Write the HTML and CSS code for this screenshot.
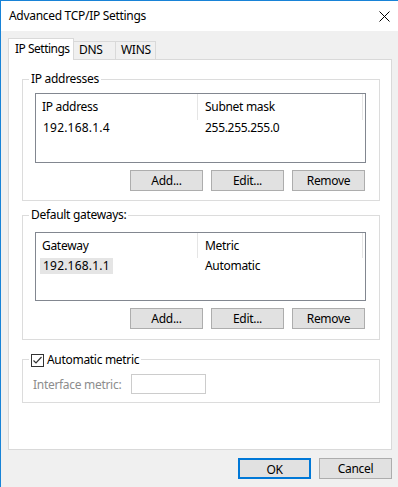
FILE: index.html
```html
<!DOCTYPE html>
<html lang="en">
<head>
    <meta charset="UTF-8" />
    <title>Advanced TCP/IP Settings</title>
    <link rel="stylesheet" href="styles.css">
</head>
<body>
<div class="window">
    <div class="titlebar">
        <span class="title">Advanced TCP/IP Settings</span>
        <svg class="close" width="11" height="11" viewBox="0 0 11 11">
            <path d="M0.5 0.5 L10.5 10.5 M10.5 0.5 L0.5 10.5" stroke="#000" stroke-width="1" fill="none"/>
        </svg>
    </div>
    <div class="content">
        <div class="tabs">
            <div class="tab active">IP Settings</div>
            <div class="tab dns">DNS</div>
            <div class="tab wins">WINS</div>
        </div>
        <div class="panel">
            <fieldset class="group g1">
                <legend>IP addresses</legend>
                <div class="group-body">
                    <div class="list">
                        <div class="row head">
                            <div class="col c1">IP address</div>
                            <div class="col c2">Subnet mask</div>
                        </div>
                        <div class="row">
                            <div class="col c1"><span class="val">192.168.1.4</span></div>
                            <div class="col c2">255.255.255.0</div>
                        </div>
                    </div>
                    <div class="buttons">
                        <button class="btn">Add...</button>
                        <button class="btn">Edit...</button>
                        <button class="btn">Remove</button>
                    </div>
                </div>
            </fieldset>

            <fieldset class="group g2">
                <legend>Default gateways:</legend>
                <div class="group-body">
                    <div class="list short">
                        <div class="row head">
                            <div class="col c1">Gateway</div>
                            <div class="col c2">Metric</div>
                        </div>
                        <div class="row">
                            <div class="col c1"><span class="val selected">192.168.1.1</span></div>
                            <div class="col c2">Automatic</div>
                        </div>
                    </div>
                    <div class="buttons">
                        <button class="btn">Add...</button>
                        <button class="btn">Edit...</button>
                        <button class="btn">Remove</button>
                    </div>
                </div>
            </fieldset>

            <fieldset class="group g3">
                <legend class="check-legend">
                    <svg class="checkbox" width="13" height="13" viewBox="0 0 13 13">
                        <rect x="0.5" y="0.5" width="12" height="12" fill="#fff" stroke="#333"/>
                        <path d="M2.5 6.5 L5 9 L10.5 3" stroke="#333" stroke-width="1.2" fill="none"/>
                    </svg>
                    <span>Automatic metric</span>
                </legend>
                <div class="group-body metric">
                    <span class="metric-label">Interface metric:</span>
                    <div class="input"></div>
                </div>
            </fieldset>
        </div>
        <div class="footer">
            <button class="btn ok">OK</button>
            <button class="btn">Cancel</button>
        </div>
    </div>
</div>
</body>
</html>
```

FILE: styles.css
```css
* {margin: 0; padding: 0; box-sizing: border-box;}
body {
    background: #f0f0f0;
    font-family: "Noto Sans", "Open Sans", sans-serif;
    font-size: 12px;
    letter-spacing: -0.3px;
    color: #000;
}
.window {
    width: 398px;
    height: 487px;
    border-left: 1px solid #1883d7;
    border-top: 1px solid #1883d7;
    background: #f0f0f0;
}
.titlebar {
    height: 30px;
    background: #fff;
    display: flex;
    align-items: center;
    justify-content: space-between;
    padding: 0 8px 0 8px;
}
.title {
    line-height: 16px;
}
.close {
    display: block;
}
.content {
    padding: 7px 6px 0 7px;
}
.tabs {
    display: flex;
    align-items: flex-end;
    height: 21px;
}
.tab {
    height: 18px;
    line-height: 16px;
    white-space: nowrap;
    border: 1px solid #d9d9d9;
    border-bottom: none;
    border-left: none;
    background: #f0f0f0;
}
.tab.active {
    position: relative;
    z-index: 1;
    height: 22px;
    width: 66px;
    border-left: 1px solid #d9d9d9;
    background: #fff;
    padding: 2px 0 0 6px;
    margin-bottom: -1px;
    letter-spacing: -0.5px;
}
.tab.dns {
    width: 42px;
    padding-left: 5px;
}
.tab.wins {
    width: 40px;
    padding-left: 5px;
}
.panel {
    width: 384px;
    height: 391px;
    border: 1px solid #d9d9d9;
    background: #fff;
    padding: 11px 11px 0 13px;
}
.group {
    border: 1px solid #dcdcdc;
    padding: 0;
    min-width: 0;
}
.group legend {
    margin-left: 6px;
    padding: 0 2px;
    line-height: 16px;
}
.group-body {
    padding: 6px 13px 9px 12px;
}
.g2 {
    margin-top: 6px;
}
.g2 .group-body {
    padding-top: 9px;
    padding-bottom: 10px;
}
.g3 {
    margin-top: 10px;
}
.list {
    height: 70px;
    border: 1px solid #828790;
    background: #fff;
}
.list.short {
    height: 69px;
}
.row {
    display: flex;
    height: 16px;
    line-height: 16px;
}
.row.head {
    height: 26px;
    line-height: 26px;
}
.short .row.head {
    height: 25px;
    line-height: 25px;
}
.col.c1 {
    width: 162px;
    padding-left: 7px;
}
.head .col.c1 {
    padding-left: 6px;
    border-right: 1px solid #e5e5e5;
}
.col.c2 {
    width: 165px;
    padding-left: 7px;
}
.head .col.c2 {
    border-right: 1px solid #e5e5e5;
}
.val {
    letter-spacing: 0.2px;
}
.val.selected {
    display: inline-block;
    background: #e5e5e5;
    margin-left: -3px;
    padding: 0 3px;
}
.buttons {
    display: flex;
    justify-content: flex-end;
    gap: 8px;
    margin-top: 7px;
    margin-right: 1px;
}
.btn {
    width: 73px;
    height: 21px;
    border: 1px solid #adadad;
    background: #e1e1e1;
    font-family: inherit;
    font-size: 12px;
    letter-spacing: -0.3px;
    color: #000;
    line-height: 19px;
}
.group legend.check-legend {
    display: flex;
    align-items: flex-end;
    gap: 3px;
    height: 18px;
    line-height: 16px;
}
.checkbox {
    display: block;
    margin-bottom: 1px;
}
.metric {
    display: flex;
    align-items: center;
    padding: 6px 13px 8px 10px;
}
.metric-label {
    width: 98px;
    color: #8d8d8d;
}
.input {
    width: 75px;
    height: 20px;
    border: 1px solid #cccccc;
    background: #fff;
}
.footer {
    display: flex;
    justify-content: flex-end;
    gap: 8px;
    margin-top: 8px;
}
.btn.ok {
    border: 2px solid #0078d7;
}
```
